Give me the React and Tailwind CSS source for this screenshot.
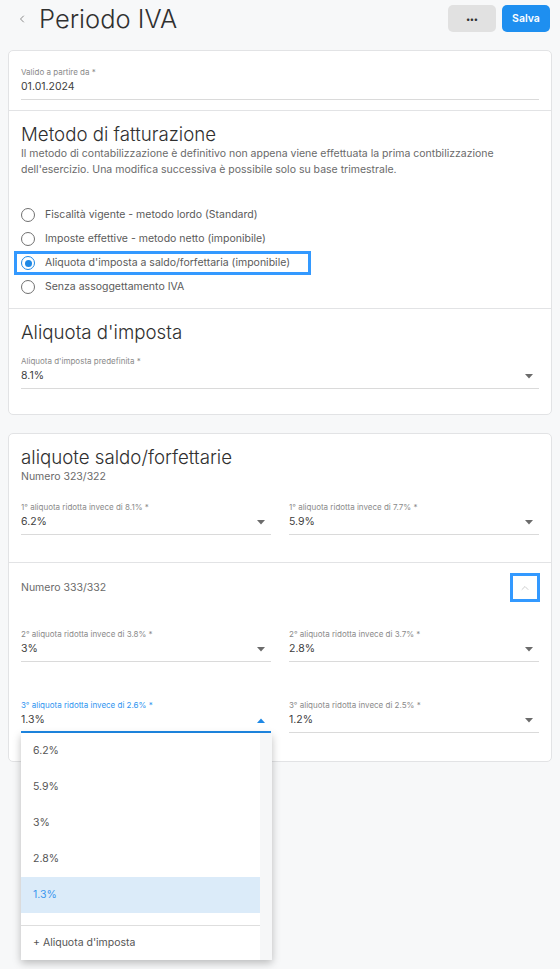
import React, { useState } from 'react'
import { ChevronLeft, ChevronUp } from 'lucide-react'

// Page "Periodo IVA" — billing method form with an open select dropdown.

const FONT = { fontFamily: 'Inter, "Noto Sans", sans-serif' }

function Caret({ up, blue }) {
  return (
    <svg width="8" height="5" viewBox="0 0 8 5" className={up ? 'rotate-180' : ''}>
      <path d="M0 0h8L4 4.5z" fill={blue ? '#1e88e5' : '#6b6b6b'} />
    </svg>
  )
}

// Underlined select-like field with a small label above
function Field({ label, value, select, active }) {
  return (
    <div>
      <div className={`text-[8px] leading-[12px] mb-px ${active ? 'text-[#2f95f0]' : 'text-[#8a8a8a]'}`}>{label}</div>
      <div
        className={`flex items-center justify-between text-[10.5px] leading-[16px] text-[#404040] ${
          active ? 'pb-[3px] border-b-2 border-[#1e88e5]' : 'pb-[4px] border-b border-[#dadada]'
        }`}
      >
        <span>{value}</span>
        {select && (
          <span className="mr-[6px]">
            <Caret up={active} blue={active} />
          </span>
        )}
      </div>
    </div>
  )
}

function Radio({ label, checked }) {
  return (
    <div
      className={`flex items-center h-[24px] w-fit -ml-[7px] pl-[4px] pr-[18px] border-[3px] ${
        checked ? 'border-[#3399ff]' : 'border-transparent'
      }`}
    >
      <span
        className={`w-[14px] h-[14px] rounded-full border-[1.5px] flex items-center justify-center ${
          checked ? 'border-[#1e88e5]' : 'border-[#707070]'
        }`}
      >
        {checked && <span className="w-[7px] h-[7px] rounded-full bg-[#1e88e5]" />}
      </span>
      <span className="ml-[10px] text-[10.5px] text-[#5a5a5a]">{label}</span>
    </div>
  )
}

export default function App() {
  const [method] = useState(2)
  const options = [
    'Fiscalità vigente - metodo lordo (Standard)',
    'Imposte effettive - metodo netto (imponibile)',
    "Aliquota d'imposta a saldo/forfettaria (imponibile)",
    'Senza assoggettamento IVA',
  ]
  const menuItems = ['6.2%', '5.9%', '3%', '2.8%', '1.3%']

  return (
    <div className="min-h-[969px] bg-[#f7f8f9] pb-10" style={FONT}>
      {/* Header */}
      <div className="flex items-center h-[37px] pl-[16px] pr-[10px]">
        <ChevronLeft size={12} strokeWidth={1.5} className="text-[#666]" />
        <h1 className="ml-[11px] text-[25.5px] font-light text-[#303030] leading-none">Periodo IVA</h1>
        <div className="ml-auto flex gap-[6px]">
          <button className="w-[48px] h-[27px] rounded-[5px] bg-[#e1e1e1] text-[#333] text-[8px] font-bold leading-none">
            •••
          </button>
          <button className="w-[48px] h-[27px] rounded-[5px] bg-[#1e8ff0] text-white text-[10.5px] font-semibold">
            Salva
          </button>
        </div>
      </div>

      {/* Card 1 */}
      <div className="mx-[8px] mt-[13px] bg-white border border-[#e2e3e5] rounded-[5px]">
        <div className="px-[12px] pt-[15px] pb-[10px] border-b border-[#e2e3e5]">
          <Field label="Valido a partire da *" value="01.01.2024" />
        </div>

        <div className="px-[12px] pt-[13px] pb-[9px] border-b border-[#e2e3e5]">
          <h2 className="text-[18.7px] font-light leading-[22px] text-[#303030]">Metodo di fatturazione</h2>
          <p className="text-[10.5px] leading-[16px] text-[#6a6a6a]">
            Il metodo di contabilizzazione è definitivo non appena viene effettuata la prima contbilizzazione
            dell'esercizio. Una modifica successiva è possibile solo su base trimestrale.
          </p>
          <div className="mt-[25px]">
            {options.map((o, i) => (
              <Radio key={o} label={o} checked={i === method} />
            ))}
          </div>
        </div>

        <div className="px-[12px] pt-[13px] pb-[25px]">
          <h2 className="text-[18.7px] font-light leading-[22px] text-[#303030] mb-[11px]">Aliquota d'imposta</h2>
          <Field label="Aliquota d'imposta predefinita *" value="8.1%" select />
        </div>
      </div>

      {/* Card 2 */}
      <div className="mx-[8px] mt-[18px] bg-white border border-[#e2e3e5] rounded-[5px]">
        <div className="px-[12px] pt-[13px] pb-[27px] border-b border-[#e2e3e5]">
          <h2 className="text-[18.7px] font-light leading-[22px] text-[#303030]">aliquote saldo/forfettarie</h2>
          <div className="text-[10.5px] leading-[16px] text-[#6a6a6a]">Numero 323/322</div>
          <div className="mt-[16px] grid grid-cols-2 gap-x-[18px]">
            <Field label="1° aliquota ridotta invece di 8.1% *" value="6.2%" select />
            <Field label="1° aliquota ridotta invece di 7.7% *" value="5.9%" select />
          </div>
        </div>

        <div className="px-[12px] pt-[10px] pb-[28px]">
          <div className="flex items-center justify-between">
            <span className="text-[10.5px] text-[#6a6a6a]">Numero 333/332</span>
            <button className="w-[30px] h-[29px] -mr-[1px] border-[3px] border-[#3399ff] flex items-center justify-center">
              <ChevronUp size={12} strokeWidth={1.5} className="text-[#bdbdbd]" />
            </button>
          </div>
          <div className="mt-[26px] grid grid-cols-2 gap-x-[18px] gap-y-[37px]">
            <Field label="2° aliquota ridotta invece di 3.8% *" value="3%" select />
            <Field label="2° aliquota ridotta invece di 3.7% *" value="2.8%" select />
            <div className="relative">
              <Field label="3° aliquota ridotta invece di 2.6% *" value="1.3%" select active />
              {/* Open dropdown menu */}
              <div className="absolute z-20 left-0 top-full w-[251px] bg-white shadow-[0_3px_8px_rgba(0,0,0,0.25)] flex">
                <div className="flex-1">
                  {menuItems.map((m) => (
                    <div
                      key={m}
                      className={`h-[36px] flex items-center px-[12px] text-[10.5px] ${
                        m === '1.3%' ? 'bg-[#dbebf9] text-[#3b97ee]' : 'text-[#555]'
                      }`}
                    >
                      {m}
                    </div>
                  ))}
                  <div className="mt-[12px] border-t border-[#dedede] h-[35px] flex items-center px-[12px] text-[10.5px] text-[#555]">
                    + Aliquota d'imposta
                  </div>
                </div>
                <div className="w-[12px] bg-[#f6f7f8]" />
              </div>
            </div>
            <Field label="3° aliquota ridotta invece di 2.5% *" value="1.2%" select />
          </div>
        </div>
      </div>
    </div>
  )
}
